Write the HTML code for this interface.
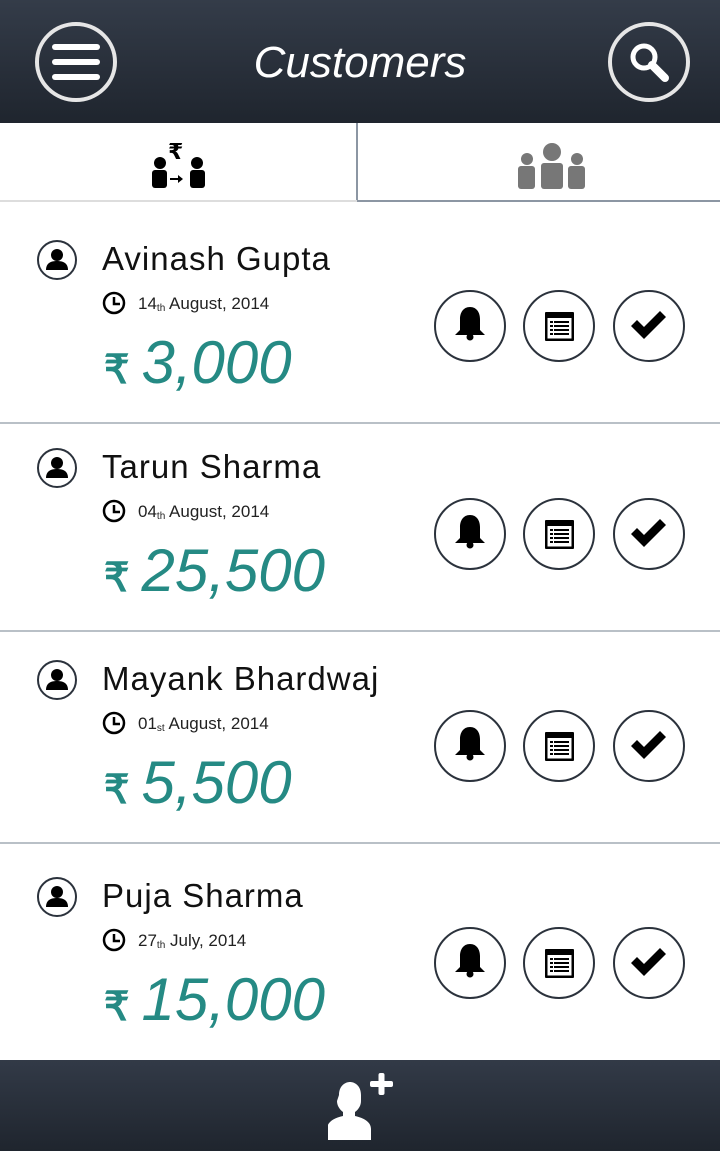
<!DOCTYPE html>
<html><head><meta charset="utf-8"><style>
*{margin:0;padding:0;box-sizing:border-box}
body{width:720px;height:1151px;position:relative;background:#fff;font-family:"Liberation Sans",sans-serif;overflow:hidden}
.hdr{position:absolute;left:0;top:0;width:720px;height:123px;background:linear-gradient(#343c49,#1f252e)}
.title{position:absolute;left:0;width:720px;top:38px;text-align:center;color:#fff;font-size:44px;font-style:italic;font-weight:300}
.tabs{position:absolute;top:123px;left:0;width:720px;height:79px}
.row{position:absolute;left:0;width:720px;border-bottom:2px solid #b9c0c7}
.a{position:absolute}
.name{position:absolute;left:102px;font-size:33px;color:#111;letter-spacing:1px}
.date{position:absolute;left:138px;font-size:17px;color:#222}
.date sub{font-size:10px;vertical-align:baseline;position:relative;top:2px}
.amt{position:absolute;left:104px;color:#258a84;font-style:italic;font-size:60px;white-space:nowrap}
.amt span{font-style:normal;font-weight:bold;font-size:40px;margin-right:12px}
.ft{position:absolute;left:0;top:1060px;width:720px;height:91px;background:linear-gradient(#323a47,#1f252e)}
</style></head><body>
<div class="hdr">
<svg class="a" style="left:34px;top:22px" width="84" height="80"><ellipse cx="42" cy="40" rx="39" ry="38" fill="none" stroke="#e6e6e6" stroke-width="4"/><g stroke="#fff" stroke-width="6" stroke-linecap="round"><line x1="21" y1="25" x2="63" y2="25"/><line x1="21" y1="40" x2="63" y2="40"/><line x1="21" y1="55" x2="63" y2="55"/></g></svg>
<div class="title">Customers</div>
<svg class="a" style="left:607px;top:22px" width="84" height="80"><ellipse cx="42" cy="40" rx="39" ry="38" fill="none" stroke="#e6e6e6" stroke-width="4"/><circle cx="37" cy="35" r="11" fill="none" stroke="#fff" stroke-width="5"/><line x1="45" y1="43" x2="58" y2="56" stroke="#fff" stroke-width="8" stroke-linecap="round"/></svg>
</div>
<div class="tabs">
<div class="a" style="left:356px;top:0;width:2px;height:79px;background:#8c96a3"></div>
<div class="a" style="left:0;top:77px;width:357px;height:2px;background:#ddd"></div>
<div class="a" style="left:357px;top:77px;width:363px;height:2px;background:#8c96a3"></div>
<svg class="a" style="left:150px;top:14px" width="60" height="52"><text x="18" y="22" font-size="22" font-weight="bold" font-family="DejaVu Sans">₹</text><circle cx="10" cy="26" r="6"/><rect x="2" y="33" width="15" height="18" rx="3"/><circle cx="47" cy="26" r="6"/><rect x="40" y="33" width="15" height="18" rx="3"/><path d="M20 41h8v-3l5 4-5 4v-3h-8z"/></svg>
<svg class="a" style="left:515px;top:18px" width="74" height="52" fill="#777"><circle cx="12" cy="18" r="6"/><rect x="3" y="25" width="17" height="23" rx="3"/><circle cx="37" cy="11" r="9"/><rect x="26" y="22" width="22" height="26" rx="3"/><circle cx="62" cy="18" r="6"/><rect x="53" y="25" width="17" height="23" rx="3"/></svg>
</div>

<div class="row" style="top:202px;height:222px"></div>
<div class="row" style="top:424px;height:208px"></div>
<div class="row" style="top:632px;height:212px"></div>

<div id="rows"></div>

<script>
var d=[["Avinash Gupta","14","th","August, 2014","3,000",0],["Tarun Sharma","04","th","August, 2014","25,500",208],["Mayank Bhardwaj","01","st","August, 2014","5,500",420],["Puja Sharma","27","th","July, 2014","15,000",637]];
var h="";
d.forEach(function(r){var o=r[5];
h+='<svg class="a" style="left:36px;top:'+(239+o)+'px" width="42" height="42"><circle cx="21" cy="21" r="19" fill="none" stroke="#2b323c" stroke-width="2"/><circle cx="21" cy="16" r="6"/><path d="M10 31c0-7 5-9 11-9s11 2 11 9z"/></svg>';
h+='<div class="name" style="top:'+(240+o)+'px">'+r[0]+'</div>';
h+='<svg class="a" style="left:102px;top:'+(291+o)+'px" width="26" height="26"><circle cx="12" cy="12" r="10" fill="none" stroke="#000" stroke-width="2.5"/><path d="M12 6v7h6" fill="none" stroke="#000" stroke-width="2.5"/></svg>';
h+='<div class="date" style="top:'+(294+o)+'px">'+r[1]+'<sub>'+r[2]+'</sub> '+r[3]+'</div>';
h+='<div class="amt" style="top:'+(328+o)+'px"><span>₹</span>'+r[4]+'</div>';
var xs=[433,522,612];
xs.forEach(function(x,i){
h+='<svg class="a" style="left:'+x+'px;top:'+(289+o)+'px" width="74" height="74"><ellipse cx="37" cy="37" rx="35" ry="35" fill="none" stroke="#2b323c" stroke-width="2"/>';
if(i==0)h+='<path d="M37 18c-7 0-10 6-10 12v11l-5 5h30l-5-5v-11c0-6-3-12-10-12z"/><circle cx="37" cy="48" r="3.5"/>';
if(i==1)h+='<rect x="23" y="23" width="29" height="29" rx="1"/><rect x="25.5" y="29" width="24" height="20.5" fill="#fff"/><g fill="#000"><rect x="28" y="32" width="3" height="2"/><rect x="32" y="32" width="15" height="2"/><rect x="28" y="36" width="3" height="2"/><rect x="32" y="36" width="15" height="2"/><rect x="28" y="40" width="3" height="2"/><rect x="32" y="40" width="15" height="2"/><rect x="28" y="44" width="3" height="2"/><rect x="32" y="44" width="15" height="2"/></g>';
if(i==2)h+='<path d="M19 37l6-6 7 7 16-16 6 6-22 22z"/>';
h+='</svg>';});
});
document.getElementById("rows").innerHTML=h;
</script>

<div class="ft">
<svg class="a" style="left:328px;top:10px" width="70" height="72" fill="#fff"><path d="M15 25c0-9 6-13 11-13s11 4 11 13v6c0 4-2 8-6 11v4c9 2 16 6 16 13v11h-44v-11c0-7 7-11 16-13v-4c-4-3-6-7-6-11z" transform="translate(-4 0)"/><rect x="42" y="11" width="23" height="6" rx="2"/><rect x="50.5" y="3" width="6" height="22" rx="2"/></svg>
</div>
</body></html>
